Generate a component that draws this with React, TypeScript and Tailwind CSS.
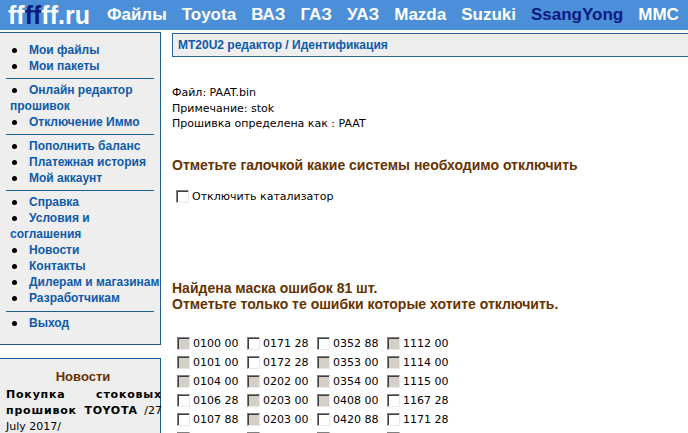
import React from "react";

const NAV = ["Файлы", "Toyota", "ВАЗ", "ГАЗ", "УАЗ", "Mazda", "Suzuki", "SsangYong", "MMC"];

const MENU: string[][] = [
  ["Мои файлы", "Мои пакеты"],
  ["Онлайн редактор прошивок", "Отключение Иммо"],
  ["Пополнить баланс", "Платежная история", "Мой аккаунт"],
  ["Справка", "Условия и соглашения", "Новости", "Контакты", "Дилерам и магазинам", "Разработчикам"],
  ["Выход"],
];

// g = disabled (grey) box, w = plain white box
const CODES: Array<[string, "g" | "w"][]> = [
  [["0100 00", "g"], ["0171 28", "w"], ["0352 88", "w"], ["1112 00", "g"]],
  [["0101 00", "g"], ["0172 28", "w"], ["0353 00", "g"], ["1114 00", "g"]],
  [["0104 00", "g"], ["0202 00", "g"], ["0354 00", "g"], ["1115 00", "g"]],
  [["0106 28", "w"], ["0203 00", "g"], ["0408 00", "g"], ["1167 28", "w"]],
  [["0107 88", "w"], ["0203 00", "g"], ["0420 88", "w"], ["1171 28", "w"]],
  [["0110 00", "w"], ["0204 00", "g"], ["0500 00", "g"], ["1172 28", "w"]],
];

function Box({ grey }: { grey?: boolean }) {
  return (
    <span
      className={`inline-block w-[13px] h-[13px] shrink-0 border border-t-[#808080] border-l-[#808080] border-b-[#e8e8e8] border-r-[#e8e8e8] shadow-[inset_1px_1px_0_#404040] ${
        grey ? "bg-[#d4d0c8]" : "bg-white"
      }`}
    />
  );
}

export default function App() {
  return (
    <div className="w-[688px] h-[433px] overflow-hidden bg-white text-black">
      {/* top bar */}
      <div className="h-[30px] bg-[#4a8fd8] flex items-center pl-[8px] whitespace-nowrap font-['Liberation_Sans',Arial,sans-serif] font-bold">
        <span className="text-[25px] leading-none mr-[17px] text-white">
          ff<span className="text-[#0d1b7a]">ff</span>ff.ru
        </span>
        <div className="flex gap-[15px] text-[17px]">
          {NAV.map((n) => (
            <span key={n} className={n === "SsangYong" ? "text-[#0a1a80]" : "text-white"}>
              {n}
            </span>
          ))}
        </div>
      </div>

      <div className="flex mt-[2px] items-start">
        {/* sidebar */}
        <div className="w-[161px] shrink-0 flex flex-col">
          <div className="bg-[#eeeeee] border border-l-0 border-[#1e5e8e] pt-[9px] pb-[13px] font-['Liberation_Sans',Arial,sans-serif] font-bold text-[12px] leading-[16px]">
            {MENU.map((grp, gi) => (
              <div key={gi}>
                {gi > 0 && (
                  <div
                    className={`mx-[6px] mb-[3px] border-t border-[#1e5e8e] ${gi === 4 ? "mt-[5px]" : "mt-[4px]"}`}
                  />
                )}
                <ul>
                  {grp.map((it) => (
                    <li key={it} className="pl-[10px]">
                      <span className="inline-block w-[19px] pl-[2px] text-black">
                        <span className="inline-block w-[5px] h-[5px] rounded-full bg-black align-middle" />
                      </span>
                      <a className="text-[#0e5aab]">{it}</a>
                    </li>
                  ))}
                </ul>
              </div>
            ))}
          </div>
          <div className="mt-[13px] h-[100px] bg-[#eeeeee] border border-l-0 border-b-0 border-[#1e5e8e] pl-[6px] pt-[10px]">
            <div className="text-center font-['Liberation_Sans',Arial,sans-serif] font-bold text-[13px] leading-[16px] text-[#663300] mb-[2px]">
              Новости
            </div>
            <div className="w-[156px] text-justify font-['DejaVu_Sans',Verdana,sans-serif] text-[11px] leading-[16px]">
              <b className="tracking-[0.8px]">Покупка стоковых прошивок TOYOTA</b> /27 July 2017/
            </div>
          </div>
        </div>

        {/* main */}
        <div className="ml-[11px] w-[560px] shrink-0">
          <div className="h-[24px] mt-[1px] bg-[#eeeeee] border border-[#2a6496] flex items-center pl-[5px] font-['Liberation_Sans',Arial,sans-serif] font-bold text-[12px] text-[#0e5aab]">
            MT20U2 редактор / Идентификация
          </div>

          <div className="mt-[28px] font-['DejaVu_Sans',Verdana,sans-serif] text-[11px] leading-[15.5px]">
            <div>Файл: PAAT.bin</div>
            <div>Примечание: stok</div>
            <div>Прошивка определена как : PAAT</div>
          </div>

          <div className="mt-[25px] font-['Liberation_Sans',Arial,sans-serif] font-bold text-[14px] leading-[16px] text-[#663300]">
            Отметьте галочкой какие системы необходимо отключить
          </div>

          <div className="mt-[16px] flex items-center gap-[3px] pl-[4px] font-['DejaVu_Sans',Verdana,sans-serif] text-[11px]">
            <Box />
            <span>Отключить катализатор</span>
          </div>

          <div className="mt-[75px] font-['Liberation_Sans',Arial,sans-serif] font-bold text-[14px] leading-[16px] text-[#663300]">
            <div>Найдена маска ошибок 81 шт.</div>
            <div>Отметьте только те ошибки которые хотите отключить.</div>
          </div>

          <div className="mt-[25px] pl-[5px] flex flex-col gap-[6px] font-['DejaVu_Sans',Verdana,sans-serif] text-[11px] leading-[13px]">
            {CODES.map((row, ri) => (
              <div key={ri} className="flex">
                {row.map(([c, t], ci) => (
                  <div key={ci} className="w-[70px] flex items-center gap-[3px]">
                    <Box grey={t === "g"} />
                    <span>{c}</span>
                  </div>
                ))}
              </div>
            ))}
          </div>
        </div>
      </div>
    </div>
  );
}
